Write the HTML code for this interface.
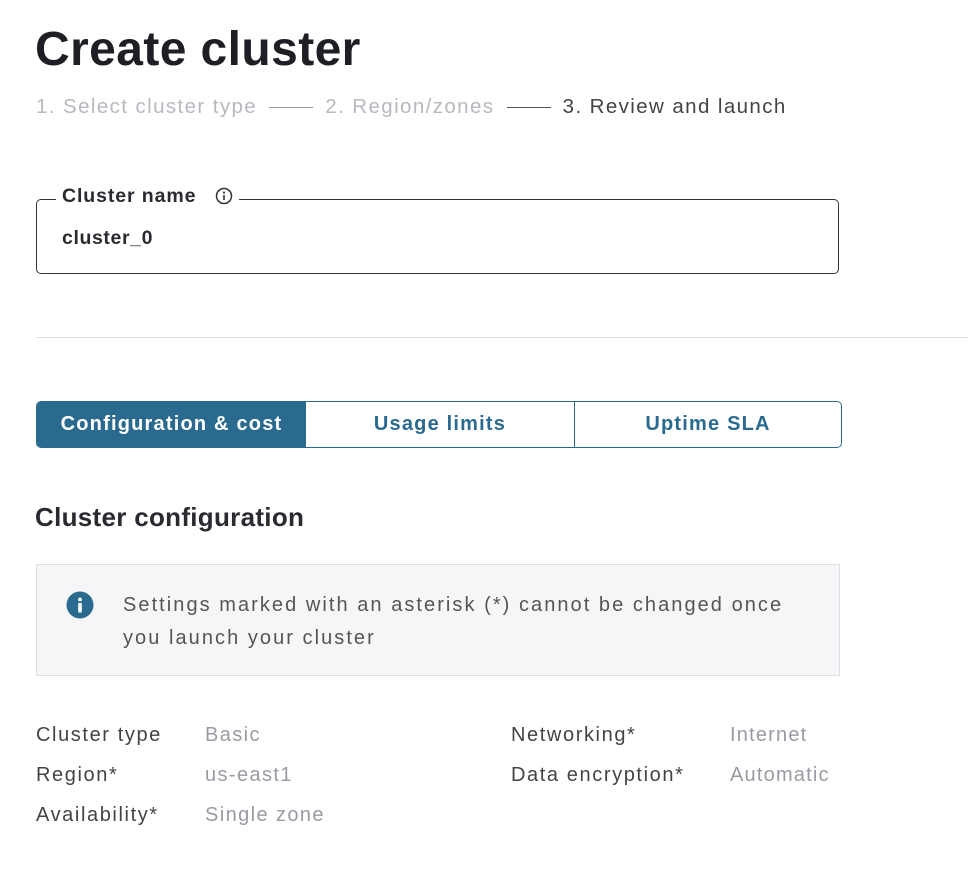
<!DOCTYPE html>
<html><head><style>
body{margin:0;width:968px;height:888px;background:#fff;font-family:"Liberation Sans",sans-serif;position:relative;overflow:hidden;color:#222}
.a{position:absolute;white-space:nowrap}
</style></head><body>
<div class="a" style="left:35px;top:22px;font-size:48px;font-weight:bold;color:#1e1e24;letter-spacing:0.4px">Create cluster</div>
<div class="a" style="left:36px;top:95px;font-size:20.5px;color:#b8b8c0;letter-spacing:1.4px">1. Select cluster type <span style="display:inline-block;width:44px;border-top:1.5px solid #999;vertical-align:middle;margin:0 5px"></span> 2. Region/zones <span style="display:inline-block;width:44px;border-top:1.5px solid #555;vertical-align:middle;margin:0 5px"></span> <span style="color:#444">3. Review and launch</span></div>
<div class="a" style="left:36px;top:199px;width:803px;height:75px;border:1.5px solid #333;border-radius:5px;box-sizing:border-box"></div>
<div class="a" style="left:56px;top:185px;background:#fff;padding:0 6px;font-size:19.5px;font-weight:bold;color:#2a2a30;letter-spacing:0.9px">Cluster name <svg width="18" height="18" viewBox="0 0 18 18" style="vertical-align:-3px;margin-left:12px"><circle cx="9" cy="9" r="7.5" fill="none" stroke="#333" stroke-width="1.5"/><circle cx="9" cy="5.5" r="1.1" fill="#333"/><path d="M9 8v5" stroke="#333" stroke-width="1.6"/></svg></div>
<div class="a" style="left:62px;top:227px;font-size:19.5px;font-weight:bold;color:#2a2a30;letter-spacing:0.6px">cluster_0</div>
<div class="a" style="left:36px;top:337px;width:932px;height:1px;background:#e2e2e6"></div>
<div class="a" style="left:36px;top:401px;width:806px;height:47px;border:1.5px solid #2a6a8f;border-radius:5px;box-sizing:border-box;display:flex;overflow:hidden;font-size:20px;font-weight:bold;color:#2a6a8f;letter-spacing:1.2px">
<div style="width:269px;background:#2a6a8f;color:#fff;display:flex;align-items:center;justify-content:center">Configuration &amp; cost</div>
<div style="width:268px;border-right:1.5px solid #2a6a8f;display:flex;align-items:center;justify-content:center">Usage limits</div>
<div style="flex:1;display:flex;align-items:center;justify-content:center">Uptime SLA</div>
</div>
<div class="a" style="left:35px;top:502px;font-size:26px;font-weight:bold;color:#2a2a30;letter-spacing:0.3px">Cluster configuration</div>
<div class="a" style="left:36px;top:564px;width:804px;height:112px;background:#f6f6f8;border:1px solid #e0e0e4;box-sizing:border-box"></div>
<svg class="a" style="left:66px;top:591px" width="28" height="28" viewBox="0 0 28 28"><circle cx="14" cy="14" r="13.5" fill="#2a6a8f"/><circle cx="14" cy="8.5" r="1.9" fill="#fff"/><rect x="12.2" y="12" width="3.6" height="9.5" rx="0.5" fill="#fff"/></svg>
<div class="a" style="left:123px;top:589px;font-size:20px;line-height:33px;color:#555;letter-spacing:2.05px">Settings marked with an asterisk (*) cannot be changed once<br>you launch your cluster</div>
<div class="a" style="left:36px;top:715px;font-size:20px;line-height:40px;color:#444;letter-spacing:1.6px">Cluster type<br>Region*<br>Availability*</div>
<div class="a" style="left:205px;top:715px;font-size:20px;line-height:40px;color:#9a9aa4;letter-spacing:1.4px">Basic<br>us-east1<br>Single zone</div>
<div class="a" style="left:511px;top:715px;font-size:20px;line-height:40px;color:#444;letter-spacing:1.6px">Networking*<br>Data encryption*</div>
<div class="a" style="left:730px;top:715px;font-size:20px;line-height:40px;color:#9a9aa4;letter-spacing:1.2px">Internet<br>Automatic</div>
</body></html>
